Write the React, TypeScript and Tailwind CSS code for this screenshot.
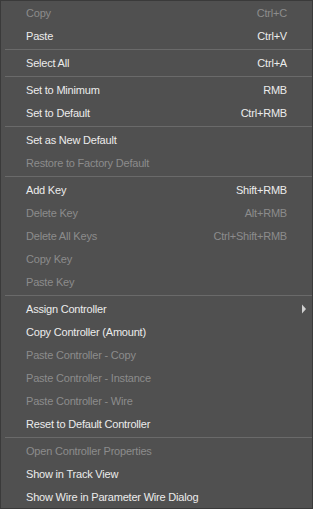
import React from "react";

type Item = { label: string; shortcut?: string; disabled?: boolean; sub?: boolean } | "sep";

const items: Item[] = [
  { label: "Copy", shortcut: "Ctrl+C", disabled: true },
  { label: "Paste", shortcut: "Ctrl+V" },
  "sep",
  { label: "Select All", shortcut: "Ctrl+A" },
  "sep",
  { label: "Set to Minimum", shortcut: "RMB" },
  { label: "Set to Default", shortcut: "Ctrl+RMB" },
  "sep",
  { label: "Set as New Default" },
  { label: "Restore to Factory Default", disabled: true },
  "sep",
  { label: "Add Key", shortcut: "Shift+RMB" },
  { label: "Delete Key", shortcut: "Alt+RMB", disabled: true },
  { label: "Delete All Keys", shortcut: "Ctrl+Shift+RMB", disabled: true },
  { label: "Copy Key", disabled: true },
  { label: "Paste Key", disabled: true },
  "sep",
  { label: "Assign Controller", sub: true },
  { label: "Copy Controller (Amount)" },
  { label: "Paste Controller - Copy", disabled: true },
  { label: "Paste Controller - Instance", disabled: true },
  { label: "Paste Controller - Wire", disabled: true },
  { label: "Reset to Default Controller" },
  "sep",
  { label: "Open Controller Properties", disabled: true },
  { label: "Show in Track View" },
  { label: "Show Wire in Parameter Wire Dialog" },
];

export default function App() {
  return (
    <div
      className="w-[313px] h-[509px] bg-[#505050] border border-[#3a3a3a] flex flex-col text-[11px] tracking-[-0.2px]"
      style={{ fontFamily: '"Liberation Sans", Arial, sans-serif' }}
    >
      {items.map((it, i) =>
        it === "sep" ? (
          <div key={i} className="h-[4px] pt-[2px] pl-[4px]">
            <div className="h-px bg-[#6a6a6a]" />
          </div>
        ) : (
          <div
            key={i}
            className={
              "h-[23px] flex items-center pl-[25px] pr-[25px] pt-[1px] relative " +
              (it.disabled ? "text-[#8c8c8c]" : "text-[#ececec]")
            }
          >
            <span className="flex-1 whitespace-nowrap">{it.label}</span>
            {it.shortcut && <span className="whitespace-nowrap">{it.shortcut}</span>}
            {it.sub && (
              <svg className="absolute left-[300px] top-[7px]" width="6" height="10" viewBox="0 0 6 10">
                <path d="M1 0.5 L5 5 L1 9.5 Z" fill="#d0d0d0" />
              </svg>
            )}
          </div>
        )
      )}
    </div>
  );
}
